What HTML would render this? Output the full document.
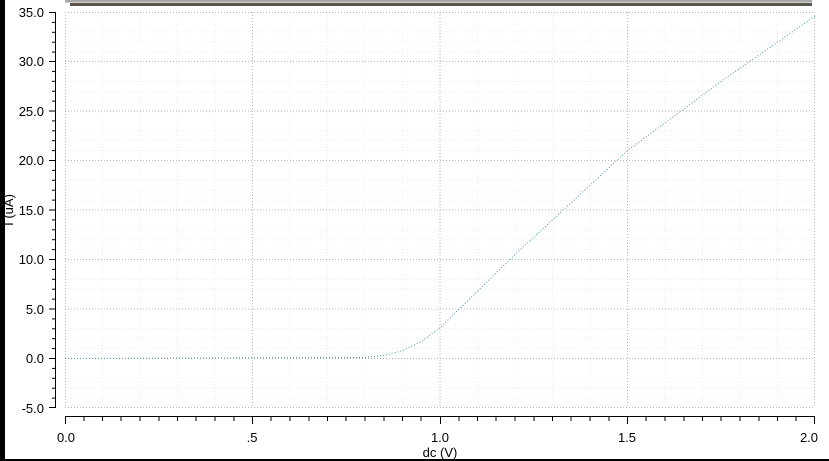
<!DOCTYPE html>
<html><head><meta charset="utf-8"><style>
html,body{margin:0;padding:0;background:#fff;width:829px;height:461px;overflow:hidden}
svg{display:block}
text{font-family:"Liberation Sans",sans-serif;font-size:13px;fill:#000}
</style></head><body>
<svg width="829" height="461" xmlns="http://www.w3.org/2000/svg">
<rect x="0" y="0" width="829" height="461" fill="#fff"/>
<rect x="0" y="0" width="5" height="461" fill="#000"/>
<rect x="0" y="459" width="829" height="2" fill="#000"/>
<rect x="65" y="0" width="747" height="2" fill="#a9a9a9"/>
<rect x="65" y="2" width="747" height="1" fill="#d0d0d0"/>
<rect x="70" y="3" width="742" height="3" fill="#5a554d"/>
<g id="minor" stroke="#e4e4e4" stroke-width="1" stroke-dasharray="1,2">
<script>/* placeholder */</script>
</g>
<g stroke="#ececec" stroke-width="1" stroke-dasharray="1,2">
<line x1="102.5" y1="12" x2="102.5" y2="408"/><line x1="140" y1="12" x2="140" y2="408"/><line x1="177.5" y1="12" x2="177.5" y2="408"/><line x1="215" y1="12" x2="215" y2="408"/>
<line x1="290" y1="12" x2="290" y2="408"/><line x1="327.5" y1="12" x2="327.5" y2="408"/><line x1="365" y1="12" x2="365" y2="408"/><line x1="402.5" y1="12" x2="402.5" y2="408"/>
<line x1="477.5" y1="12" x2="477.5" y2="408"/><line x1="515" y1="12" x2="515" y2="408"/><line x1="552.5" y1="12" x2="552.5" y2="408"/><line x1="590" y1="12" x2="590" y2="408"/>
<line x1="665" y1="12" x2="665" y2="408"/><line x1="702.5" y1="12" x2="702.5" y2="408"/><line x1="740" y1="12" x2="740" y2="408"/><line x1="777.5" y1="12" x2="777.5" y2="408"/>
<line x1="65" y1="31.8" x2="815" y2="31.8"/><line x1="65" y1="41.7" x2="815" y2="41.7"/><line x1="65" y1="51.6" x2="815" y2="51.6"/>
<line x1="65" y1="81.3" x2="815" y2="81.3"/><line x1="65" y1="91.2" x2="815" y2="91.2"/><line x1="65" y1="101.1" x2="815" y2="101.1"/>
<line x1="65" y1="130.8" x2="815" y2="130.8"/><line x1="65" y1="140.7" x2="815" y2="140.7"/><line x1="65" y1="150.6" x2="815" y2="150.6"/>
<line x1="65" y1="180.3" x2="815" y2="180.3"/><line x1="65" y1="190.2" x2="815" y2="190.2"/><line x1="65" y1="200.1" x2="815" y2="200.1"/>
<line x1="65" y1="229.8" x2="815" y2="229.8"/><line x1="65" y1="239.7" x2="815" y2="239.7"/><line x1="65" y1="249.6" x2="815" y2="249.6"/>
<line x1="65" y1="279.3" x2="815" y2="279.3"/><line x1="65" y1="289.2" x2="815" y2="289.2"/><line x1="65" y1="299.1" x2="815" y2="299.1"/>
<line x1="65" y1="328.8" x2="815" y2="328.8"/><line x1="65" y1="338.7" x2="815" y2="338.7"/><line x1="65" y1="348.6" x2="815" y2="348.6"/>
<line x1="65" y1="378.3" x2="815" y2="378.3"/><line x1="65" y1="388.2" x2="815" y2="388.2"/><line x1="65" y1="398.1" x2="815" y2="398.1"/>
</g>
<g stroke="#b4b4b4" stroke-width="1" stroke-dasharray="1,2">
<line x1="65.5" y1="12" x2="65.5" y2="408"/><line x1="252.5" y1="12" x2="252.5" y2="408"/><line x1="440" y1="12" x2="440" y2="408"/><line x1="627.5" y1="12" x2="627.5" y2="408"/><line x1="814.5" y1="12" x2="814.5" y2="408"/>
<line x1="65" y1="12.5" x2="815" y2="12.5"/><line x1="65" y1="61.5" x2="815" y2="61.5"/><line x1="65" y1="111" x2="815" y2="111"/><line x1="65" y1="160.5" x2="815" y2="160.5"/><line x1="65" y1="210" x2="815" y2="210"/><line x1="65" y1="259.5" x2="815" y2="259.5"/><line x1="65" y1="309" x2="815" y2="309"/><line x1="65" y1="358.5" x2="815" y2="358.5"/><line x1="65" y1="407.5" x2="815" y2="407.5"/>
</g>
<polyline fill="none" stroke="#4a90a8" stroke-width="1" stroke-dasharray="1,2" points="65,358.5 365,357.5 383.75,355.5 402.5,350.6 421.25,341.7 440,327.8 477.5,291.2 515,254.5 552.5,219.9 590,185.3 627.5,150.6 721.25,81.3 815,16"/>
<!-- Y axis -->
<g stroke="#000" stroke-width="1">
<line x1="55.5" y1="12" x2="55.5" y2="408"/>
<line x1="49" y1="12.5" x2="55" y2="12.5"/><line x1="49" y1="61.5" x2="55" y2="61.5"/><line x1="49" y1="111" x2="55" y2="111"/><line x1="49" y1="160.5" x2="55" y2="160.5"/><line x1="49" y1="210" x2="55" y2="210"/><line x1="49" y1="259.5" x2="55" y2="259.5"/><line x1="49" y1="309" x2="55" y2="309"/><line x1="49" y1="358.5" x2="55" y2="358.5"/><line x1="49" y1="407.5" x2="55" y2="407.5"/>
<line x1="52" y1="22.4" x2="55" y2="22.4"/><line x1="52" y1="32.3" x2="55" y2="32.3"/><line x1="52" y1="42.2" x2="55" y2="42.2"/><line x1="52" y1="52.1" x2="55" y2="52.1"/>
<line x1="52" y1="71.4" x2="55" y2="71.4"/><line x1="52" y1="81.3" x2="55" y2="81.3"/><line x1="52" y1="91.2" x2="55" y2="91.2"/><line x1="52" y1="101.1" x2="55" y2="101.1"/>
<line x1="52" y1="120.9" x2="55" y2="120.9"/><line x1="52" y1="130.8" x2="55" y2="130.8"/><line x1="52" y1="140.7" x2="55" y2="140.7"/><line x1="52" y1="150.6" x2="55" y2="150.6"/>
<line x1="52" y1="170.4" x2="55" y2="170.4"/><line x1="52" y1="180.3" x2="55" y2="180.3"/><line x1="52" y1="190.2" x2="55" y2="190.2"/><line x1="52" y1="200.1" x2="55" y2="200.1"/>
<line x1="52" y1="219.9" x2="55" y2="219.9"/><line x1="52" y1="229.8" x2="55" y2="229.8"/><line x1="52" y1="239.7" x2="55" y2="239.7"/><line x1="52" y1="249.6" x2="55" y2="249.6"/>
<line x1="52" y1="269.4" x2="55" y2="269.4"/><line x1="52" y1="279.3" x2="55" y2="279.3"/><line x1="52" y1="289.2" x2="55" y2="289.2"/><line x1="52" y1="299.1" x2="55" y2="299.1"/>
<line x1="52" y1="318.9" x2="55" y2="318.9"/><line x1="52" y1="328.8" x2="55" y2="328.8"/><line x1="52" y1="338.7" x2="55" y2="338.7"/><line x1="52" y1="348.6" x2="55" y2="348.6"/>
<line x1="52" y1="368.4" x2="55" y2="368.4"/><line x1="52" y1="378.3" x2="55" y2="378.3"/><line x1="52" y1="388.2" x2="55" y2="388.2"/><line x1="52" y1="398.1" x2="55" y2="398.1"/>
</g>
<g text-anchor="end">
<text x="44" y="17">35.0</text><text x="44" y="66">30.0</text><text x="44" y="116">25.0</text><text x="44" y="165">20.0</text><text x="44" y="215">15.0</text><text x="44" y="264">10.0</text><text x="44" y="314">5.0</text><text x="44" y="363">0.0</text><text x="44" y="413">-5.0</text>
</g>
<text transform="translate(13,210) rotate(-90)" text-anchor="middle">I (uA)</text>
<!-- X axis -->
<g stroke="#000" stroke-width="1">
<line x1="65" y1="416.5" x2="815" y2="416.5"/>
<line x1="65.5" y1="416" x2="65.5" y2="424"/><line x1="252.5" y1="416" x2="252.5" y2="424"/><line x1="440.5" y1="416" x2="440.5" y2="424"/><line x1="627.5" y1="416" x2="627.5" y2="424"/><line x1="814.5" y1="416" x2="814.5" y2="424"/>
</g>
<g stroke="#000" stroke-width="1" id="xt"></g>
<g stroke="#000" stroke-width="1">
<line x1="84" y1="416" x2="84" y2="421"/><line x1="102.5" y1="416" x2="102.5" y2="421"/><line x1="121" y1="416" x2="121" y2="421"/><line x1="140" y1="416" x2="140" y2="421"/><line x1="159" y1="416" x2="159" y2="421"/><line x1="177.5" y1="416" x2="177.5" y2="421"/><line x1="196" y1="416" x2="196" y2="421"/><line x1="215" y1="416" x2="215" y2="421"/><line x1="234" y1="416" x2="234" y2="421"/>
<line x1="271" y1="416" x2="271" y2="421"/><line x1="290" y1="416" x2="290" y2="421"/><line x1="309" y1="416" x2="309" y2="421"/><line x1="327.5" y1="416" x2="327.5" y2="421"/><line x1="346" y1="416" x2="346" y2="421"/><line x1="365" y1="416" x2="365" y2="421"/><line x1="384" y1="416" x2="384" y2="421"/><line x1="402.5" y1="416" x2="402.5" y2="421"/><line x1="421" y1="416" x2="421" y2="421"/>
<line x1="459" y1="416" x2="459" y2="421"/><line x1="477.5" y1="416" x2="477.5" y2="421"/><line x1="496" y1="416" x2="496" y2="421"/><line x1="515" y1="416" x2="515" y2="421"/><line x1="534" y1="416" x2="534" y2="421"/><line x1="552.5" y1="416" x2="552.5" y2="421"/><line x1="571" y1="416" x2="571" y2="421"/><line x1="590" y1="416" x2="590" y2="421"/><line x1="609" y1="416" x2="609" y2="421"/>
<line x1="646" y1="416" x2="646" y2="421"/><line x1="665" y1="416" x2="665" y2="421"/><line x1="684" y1="416" x2="684" y2="421"/><line x1="702.5" y1="416" x2="702.5" y2="421"/><line x1="721" y1="416" x2="721" y2="421"/><line x1="740" y1="416" x2="740" y2="421"/><line x1="759" y1="416" x2="759" y2="421"/><line x1="777.5" y1="416" x2="777.5" y2="421"/><line x1="796" y1="416" x2="796" y2="421"/>
</g>
<g text-anchor="middle">
<text x="66" y="442">0.0</text><text x="252" y="442">.5</text><text x="440" y="442">1.0</text><text x="627" y="442">1.5</text><text x="809" y="442">2.0</text>
<text x="440" y="457">dc (V)</text>
</g>
</svg>
</body></html>
